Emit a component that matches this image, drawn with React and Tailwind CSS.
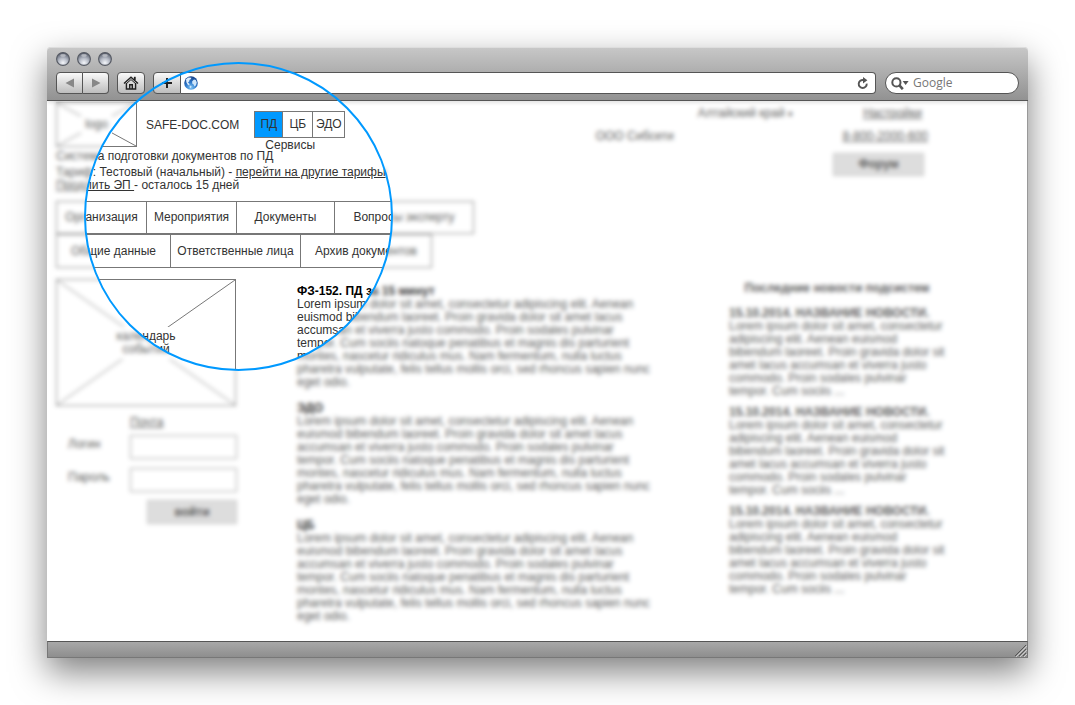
const LOREM =
  "Lorem ipsum dolor sit amet, consectetur adipiscing elit. Aenean euismod bibendum laoreet. Proin gravida dolor sit amet lacus accumsan et viverra justo commodo. Proin sodales pulvinar tempor. Cum sociis natoque penatibus et magnis dis parturient montes, nascetur ridiculus mus. Nam fermentum, nulla luctus pharetra vulputate, felis tellus mollis orci, sed rhoncus sapien nunc eget odio.";

const NEWS_TEXT =
  "Lorem ipsum dolor sit amet, consectetur adipiscing elit. Aenean euismod bibendum laoreet. Proin gravida dolor sit amet lacus accumsan et viverra justo commodo. Proin sodales pulvinar tempor. Cum sociis ...";

const articles = ["ФЗ-152. ПД за 15 минут", "ЭДО", "ЦБ"];
const news = [1, 2, 3];

const mainNav = [
  { label: "Организация", width: "w-[90px]" },
  { label: "Мероприятия", width: "w-[90px]" },
  { label: "Документы", width: "w-[98px]" },
  { label: "Вопросы эксперту", width: "w-[138px]" },
];

const subNav = [
  { label: "Общие данные", width: "w-[114px]" },
  { label: "Ответственные лица", width: "w-[130px]" },
  { label: "Архив документов", width: "w-[130px]" },
];

const chromeButton =
  "flex h-[22px] items-center justify-center border border-[#555] bg-linear-to-b from-[#fafafa] to-[#bdbdbd]";

const Light = () => (
  <svg width="14" height="14" viewBox="0 0 14 14">
    <defs>
      <radialGradient id="lamp" cx="50%" cy="80%" r="75%">
        <stop offset="0" stopColor="#f4f6fa" />
        <stop offset="0.5" stopColor="#b4b9c4" />
        <stop offset="1" stopColor="#5b6170" />
      </radialGradient>
    </defs>
    <circle cx="7" cy="7" r="6.4" fill="url(#lamp)" stroke="#565a63" strokeWidth="1.1" />
    <ellipse cx="7" cy="3.4" rx="2.8" ry="1.3" fill="#fff" opacity="0.4" />
  </svg>
);

const HomeIcon = () => (
  <svg width="16" height="14" viewBox="0 0 16 14" fill="none" stroke="#222" strokeWidth="1.4">
    <path d="M1 7.6 8 1.2l7 6.4" />
    <path d="M3.4 7v6h9.2V7" />
    <path d="M3.4 7.6 8 3.6l4.6 4" strokeWidth="1" />
    <path d="M11.8 4V.8" strokeWidth="1.8" />
    <path d="M6.7 13V8.7h2.6V13" />
  </svg>
);

const GlobeIcon = () => (
  <svg width="14" height="14" viewBox="0 0 14 14" className="shrink-0">
    <defs>
      <radialGradient id="globe" cx="50%" cy="85%" r="85%">
        <stop offset="0" stopColor="#7cc4f5" />
        <stop offset="0.5" stopColor="#2a74c8" />
        <stop offset="1" stopColor="#163f86" />
      </radialGradient>
    </defs>
    <circle cx="7" cy="7" r="6.8" fill="url(#globe)" />
    <path d="M2 3.2 4.4 1.4l3 .3-.6 1.6-1.6.6.4 1.2-1.6 1.4L5.6 8 5 9.6 3.6 8.4 2.4 6.2z" fill="#dcecfb" />
    <path d="M8.2 5.2 10 3.6l1.8.5 1 2.3-.8 2.8-1.6 1.4-.8-2.2-1.4-.8z" fill="#cfe6fa" />
    <path d="M5.6 9.6 7.6 10l-.8 2.2-1-.4z" fill="#cfe6fa" />
  </svg>
);

const ReloadIcon = () => (
  <svg width="12" height="12" viewBox="0 0 12 12">
    <path d="M9.7 6.6A4 4 0 1 1 6.4 3" fill="none" stroke="#555" strokeWidth="1.9" />
    <path d="M6 0 10.4 3.2 6 6.4z" fill="#555" />
  </svg>
);

const SearchIcon = () => (
  <svg width="18" height="13" viewBox="0 0 18 13" className="shrink-0">
    <circle cx="5.4" cy="5.4" r="4.1" fill="none" stroke="#555" strokeWidth="2" />
    <path d="m8.2 8.2 3.6 4" stroke="#555" strokeWidth="2.6" />
    <path d="M11.6 4h6l-3 4z" fill="#555" />
  </svg>
);

const Placeholder = ({ className, children }) => (
  <div className={`relative flex items-center justify-center border border-[#777] ${className}`}>
    <svg
      className="absolute inset-0 h-full w-full"
      viewBox="0 0 100 100"
      preserveAspectRatio="none"
      stroke="#777"
    >
      <path d="M0 0 100 100M100 0 0 100" vectorEffect="non-scaling-stroke" />
    </svg>
    <span className="relative bg-white text-center">{children}</span>
  </div>
);

const NavRow = ({ items, className }) => (
  <ul className={`flex w-max divide-x divide-[#777] border border-[#777] ${className}`}>
    {items.map((item) => (
      <li key={item.label} className={item.width}>
        <a href="#" className="flex h-full items-center justify-center whitespace-nowrap">
          {item.label}
        </a>
      </li>
    ))}
  </ul>
);

const Toolbar = () => (
  <header className="rounded-t-[4px] border-b border-[#555] bg-linear-to-b from-[#c8c8c8] to-[#929292] px-[9px] pt-[5px] pb-[6px] shadow-[inset_0_1px_0_#ddd]">
    <div className="flex gap-[7px]">
      <Light />
      <Light />
      <Light />
    </div>
    <div className="mt-[6px] flex items-center">
      <button aria-label="Назад" className={`${chromeButton} w-[27px] rounded-l-[4px]`}>
        <svg width="10" height="10" viewBox="0 0 10 10"><path d="M9 .5v9L.5 5z" fill="#888" /></svg>
      </button>
      <button aria-label="Вперёд" className={`${chromeButton} w-[26px] rounded-r-[4px] border-l-0`}>
        <svg width="10" height="10" viewBox="0 0 10 10"><path d="M1 .5v9L9.5 5z" fill="#888" /></svg>
      </button>
      <button aria-label="Домой" className={`${chromeButton} ml-2 w-7 rounded-[4px]`}>
        <HomeIcon />
      </button>
      <button aria-label="Добавить" className={`${chromeButton} ml-2 w-7 rounded-l-[4px]`}>
        <svg width="10" height="10" viewBox="0 0 10 10"><path d="M5 0v10M0 5h10" stroke="#222" strokeWidth="2" /></svg>
      </button>
      <div className="flex h-[22px] min-w-0 flex-1 items-center rounded-r-[4px] border border-l-0 border-[#555] bg-white pr-[6px] pl-[3px]">
        <GlobeIcon />
        <input aria-label="Адрес" className="min-w-0 flex-1 px-1 outline-none" />
        <button aria-label="Обновить"><ReloadIcon /></button>
      </div>
      <div className="ml-[9px] flex h-[22px] w-[134px] items-center rounded-full border border-[#555] bg-white pl-[5px]">
        <SearchIcon />
        <input
          aria-label="Поиск"
          placeholder="Google"
          className="ml-1 h-5 w-24 min-w-0 font-['Open_Sans',sans-serif] text-[12px] leading-5 outline-none placeholder:text-[#777]"
        />
      </div>
    </div>
  </header>
);

const TopBlock = () => (
  <div className="flex justify-between">
    <div>
      <div className="flex">
        <Placeholder className="h-[45px] w-[81px]">
          <span className="block px-1 py-[3px]">logo</span>
        </Placeholder>
        <div className="ml-[9px] pt-[17px]">SAFE-DOC.COM</div>
        <div className="ml-[15px] pt-[9px]">
          <div className="flex h-[27px] divide-x divide-[#777] border border-[#777]">
            <button className="w-7 bg-[#0099ff]">ПД</button>
            <button className="w-[30px]">ЦБ</button>
            <button className="w-[31px]">ЭДО</button>
          </div>
          <div className="mt-px -mb-3 pl-[11px]">Сервисы</div>
        </div>
      </div>
      <p className="mt-[3px]">Система подготовки документов по ПД</p>
      <p className="mt-[3px]">
        Тариф: Тестовый (начальный) - <a href="#" className="underline">перейти на другие тарифы</a>
      </p>
      <p>
        <a href="#" className="underline">Продлить ЭП </a>- осталось 15 дней
      </p>
    </div>
    <div className="flex pt-[5px] pr-[99px]">
      <span className="pt-[23px]">ООО Сибсети</span>
      <button className="ml-6 h-[13px] whitespace-nowrap">
        Алтайский край <span className="text-[9px]">▾</span>
      </button>
      <div className="ml-10 flex flex-col items-end">
        <a href="#" className="mr-[6px] underline">Настройки</a>
        <a href="#" className="mt-[10px] underline">8-800-2000-600</a>
        <button className="mt-[10px] mr-1 h-[23px] w-[91px] border border-[#bbb] bg-[#d5d5d5] font-bold">
          Форум
        </button>
      </div>
    </div>
  </div>
);

const LoginForm = () => (
  <form className="mt-[10px]">
    <a href="#" className="ml-[74px] underline">Почта</a>
    <div className="mt-[6px] flex items-start justify-between pl-3">
      <label htmlFor="login" className="pt-[3px]">Логин</label>
      <input id="login" className="h-6 w-[107px] border border-[#999] px-1 outline-none" />
    </div>
    <div className="mt-[9px] flex items-start justify-between pl-3">
      <label htmlFor="password" className="pt-[3px]">Пароль</label>
      <input id="password" type="password" className="h-6 w-[107px] border border-[#999] px-1 outline-none" />
    </div>
    <button type="button" className="mt-[8px] ml-auto block h-6 w-[90px] border border-[#bbb] bg-[#d5d5d5] font-bold">
      войти
    </button>
  </form>
);

const App = () => {
  return (
    <div className="min-h-screen bg-white p-[47px] font-['Liberation_Sans',Arial,sans-serif] text-[12px] leading-[13px] text-[#333]">
      <div className="relative rounded-t-[4px] shadow-[0_14px_34px_0_rgba(0,0,0,0.5)]">
        <Toolbar />

        <main className="relative border-r border-[#999] bg-white pt-px pr-0 pb-[18px] pl-[9px]">
          <TopBlock />
          <nav className="mt-[9px]">
            <NavRow items={mainNav} className="h-[33px]" />
            <NavRow items={subNav} className="h-[34px]" />
          </nav>

          <div className="mt-[11px] flex items-start">
            <aside className="w-[181px] shrink-0">
              <Placeholder className="mr-px h-[127px]">
                <span className="block py-[3px]">
                  календарь
                  <br />
                  событий
                </span>
              </Placeholder>
              <LoginForm />
            </aside>

            <section className="ml-[60px] flex w-[358px] shrink-0 flex-col gap-[13px] pt-[6px]">
              {articles.map((title) => (
                <article key={title}>
                  <h2 className="font-bold text-black">{title}</h2>
                  <p>{LOREM}</p>
                </article>
              ))}
            </section>

            <section className="ml-[74px] w-[216px] pt-[3px]">
              <h2 className="text-center font-bold">Последние новости подсистем</h2>
              <div className="mt-3 flex flex-col gap-2">
                {news.map((id) => (
                  <article key={id}>
                    <h3 className="font-bold">15.10.2014. НАЗВАНИЕ НОВОСТИ.</h3>
                    <p>{NEWS_TEXT}</p>
                  </article>
                ))}
              </div>
            </section>
          </div>

          {/* Soft focus everywhere except under the lens */}
          <div className="pointer-events-none absolute inset-0 bg-white/20 backdrop-blur-[2px] [mask-image:radial-gradient(circle_at_191px_115px,transparent_153px,black_154px)]" />
        </main>

        <footer className="flex h-[17px] items-end justify-end border border-t-[#555] border-[#777] bg-linear-to-b from-[#a8a8a8] to-[#8e8e8e]">
          <svg width="13" height="13" viewBox="0 0 13 13" stroke="#555">
            <path d="M1 12 12 1M5 12l7-7M9 12l3-3" />
            <path d="M2 13 13 2M6 13l7-7M10 13l3-3" stroke="#ccc" />
          </svg>
        </footer>

        {/* Lens */}
        <div className="pointer-events-none absolute top-[15px] left-[37px] size-[309px] rounded-full border-2 border-[#0099ff]" />
      </div>
    </div>
  );
};

export default App;
